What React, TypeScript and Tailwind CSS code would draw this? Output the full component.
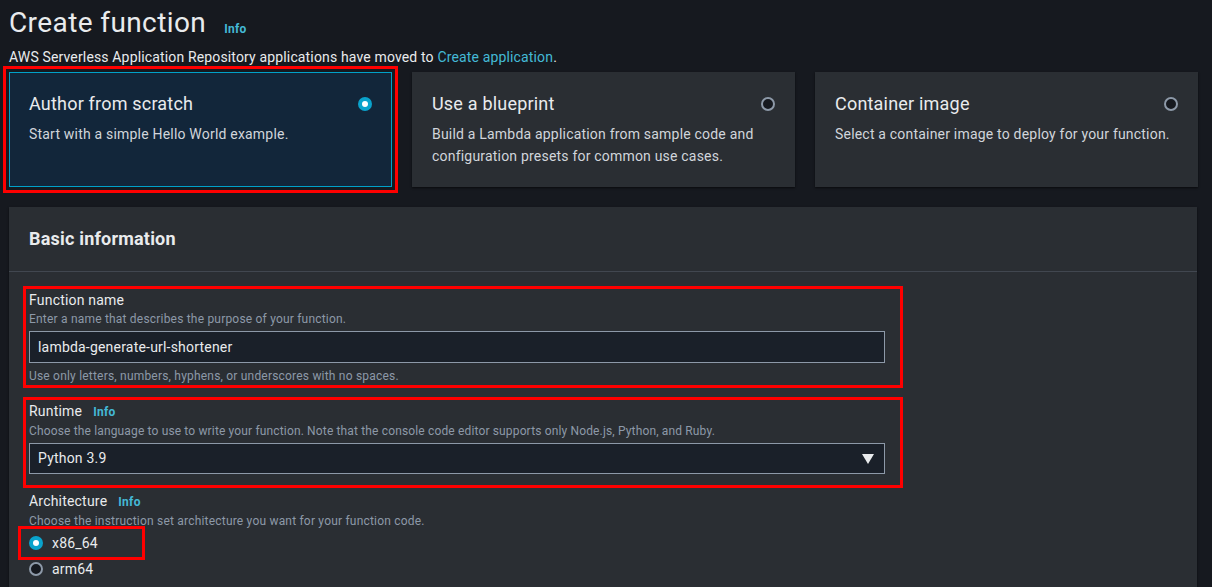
const Radio = ({ checked }: { checked: boolean }) =>
  checked ? (
    <span className="flex h-[14px] w-[14px] items-center justify-center rounded-full bg-[#0aa3cc]">
      <span className="h-[6px] w-[6px] rounded-full bg-white" />
    </span>
  ) : (
    <span className="h-[14px] w-[14px] rounded-full border-2 border-[#8d99a8] bg-[#16191f]" />
  );

type Choice = { title: string; desc: string; selected?: boolean };

const choices: Choice[] = [
  { title: "Author from scratch", desc: "Start with a simple Hello World example.", selected: true },
  { title: "Use a blueprint", desc: "Build a Lambda application from sample code and configuration presets for common use cases." },
  { title: "Container image", desc: "Select a container image to deploy for your function." },
];

const InfoLink = () => <span className="ml-[11px] text-[12px] font-bold tracking-[0.3px] text-[#44b9d6]">Info</span>;

export default function App() {
  return (
    <div className="h-[587px] w-[1212px] overflow-hidden bg-[#16191f] pl-[9px] tracking-[0.2px] text-[#d1d5db] [font-family:Roboto,'Liberation_Sans',sans-serif]">
      <div className="flex items-baseline pt-[5px]">
        <h1 className="text-[28px] leading-[36px] tracking-[0.4px] text-[#e9ebed]">Create function</h1>
        <span className="relative top-[1px] ml-[18px] text-[12px] font-bold tracking-[0.3px] text-[#44b9d6]">Info</span>
      </div>
      <p className="mt-[6px] text-[14px] leading-[20px] tracking-[0.15px] text-[#e9ebed]">
        AWS Serverless Application Repository applications have moved to{" "}
        <span className="text-[#44b9d6]">Create application</span>.
      </p>

      <div className="mt-[5px] flex gap-[20px]">
        {choices.map((c) => (
          <div
            key={c.title}
            className={
              c.selected
                ? "h-[115px] w-[383px] border border-[#00a1c9] bg-[#12263a] px-[19px] pt-[19px] outline-[3px] outline-offset-[3px] outline-[#ff0000] outline-solid"
                : "h-[115px] w-[383px] bg-[#2a2e33] px-[20px] pt-[20px] shadow-[0_1px_2px_rgba(0,0,0,0.6)]"
            }
          >
            <div className="flex items-center justify-between">
              <span className="text-[18px] leading-[24px] text-[#e9ebed]">{c.title}</span>
              <Radio checked={!!c.selected} />
            </div>
            <p className="mt-[7px] text-[14px] leading-[22px] text-[#d1d5db]">{c.desc}</p>
          </div>
        ))}
      </div>

      <div className="mt-[20px] w-[1188px] bg-[#2a2e33] pb-[30px] shadow-[0_1px_2px_rgba(0,0,0,0.6)]">
        <div className="flex h-[65px] items-center border-b border-[#414750] px-[20px]">
          <h2 className="text-[18px] font-bold leading-[24px] text-[#e9ebed]">Basic information</h2>
        </div>

        <div className="pl-[14px] pt-[14px]">
          <div className="w-[880px] border-[3px] border-[#ff0000] pb-[1px] pl-[3px] pt-[1px]">
            <div className="text-[14px] leading-[20px] text-[#e9ebed]">Function name</div>
            <div className="mt-[1px] text-[12px] leading-[16px] text-[#8d99a8]">Enter a name that describes the purpose of your function.</div>
            <div className="mt-[4px] flex h-[32px] w-[856px] items-center border border-[#8d99a8] bg-[#1a2029] px-[8px] text-[14px] text-[#e9ebed]">
              lambda-generate-url-shortener
            </div>
            <div className="mt-[5px] text-[12px] leading-[16px] text-[#8d99a8]">Use only letters, numbers, hyphens, or underscores with no spaces.</div>
          </div>

          <div className="mt-[9px] w-[880px] border-[3px] border-[#ff0000] pb-[11px] pl-[3px] pt-[1px]">
            <div className="flex items-baseline text-[14px] leading-[20px] text-[#e9ebed]">
              Runtime
              <InfoLink />
            </div>
            <div className="mt-[1px] text-[12px] leading-[16px] tracking-[0.15px] text-[#8d99a8]">
              Choose the language to use to write your function. Note that the console code editor supports only Node.js, Python, and Ruby.
            </div>
            <div className="mt-[4px] flex h-[31px] w-[856px] items-center justify-between border border-[#8d99a8] bg-[#1a2029] pl-[8px] pr-[10px] text-[14px] text-[#e9ebed]">
              Python 3.9
              <svg width="12" height="10" viewBox="0 0 12 10">
                <path d="M0 0h12L6 10z" fill="#e9ebed" />
              </svg>
            </div>
          </div>

          <div className="pl-[6px] pt-[3px]">
            <div className="flex items-baseline text-[14px] leading-[20px] text-[#e9ebed]">
              Architecture
              <InfoLink />
            </div>
            <div className="mt-[1px] text-[12px] leading-[16px] text-[#8d99a8]">
              Choose the instruction set architecture you want for your function code.
            </div>
            <div className="ml-[-11px] mt-[-3px] flex h-[34px] w-[127px] items-center gap-[9px] border-[3px] border-[#ff0000] pl-[8px] text-[14px] text-[#e9ebed]">
              <Radio checked />
              x86_64
            </div>
            <div className="mt-[-1px] flex h-[20px] items-center gap-[9px] text-[14px] text-[#e9ebed]">
              <Radio checked={false} />
              arm64
            </div>
          </div>
        </div>
      </div>
    </div>
  );
}
